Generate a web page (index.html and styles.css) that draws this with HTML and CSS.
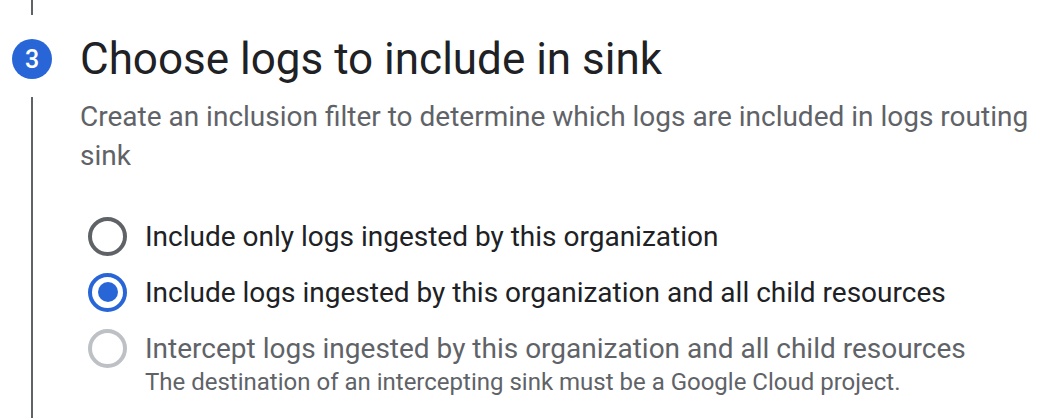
FILE: index.html
```html
<!DOCTYPE html>
<html>
<head>
<meta charset="utf-8">
<link rel="stylesheet" href="styles.css">
</head>
<body>
<div class="step">
  <div class="rail-top"></div>
  <div class="header">
    <div class="badge">3</div>
    <h2 class="title">Choose logs to include in sink</h2>
  </div>
  <div class="body">
    <div class="rail-line"></div>
    <div class="content">
      <p class="desc">Create an inclusion filter to determine which logs are included in logs routing sink</p>
      <div class="options">
        <label class="option">
          <span class="radio"></span>
          <span class="label">Include only logs ingested by this organization</span>
        </label>
        <label class="option">
          <span class="radio checked"></span>
          <span class="label">Include logs ingested by this organization and all child resources</span>
        </label>
        <div class="option-group">
          <label class="option disabled">
            <span class="radio"></span>
            <span class="label">Intercept logs ingested by this organization and all child resources</span>
          </label>
          <div class="hint">The destination of an intercepting sink must be a Google Cloud project.</div>
        </div>
      </div>
    </div>
  </div>
</div>
</body>
</html>
```

FILE: styles.css
```css
html, body {
  margin: 0;
  padding: 0;
  background: #ffffff;
  font-family: Roboto, "Liberation Sans", sans-serif;
  overflow: hidden;
}
.step {
  display: flex;
  flex-direction: column;
  height: 418px;
}
.rail-top {
  width: 2px;
  height: 15px;
  margin-left: 31px;
  background: #5f6368;
}
.header {
  display: flex;
  align-items: center;
  margin-top: 24px;
  height: 40px;
}
.badge {
  width: 40px;
  height: 40px;
  margin-left: 12px;
  border-radius: 50%;
  background: #2866d8;
  color: #fff;
  font-size: 25px;
  font-weight: 500;
  display: flex;
  align-items: center;
  justify-content: center;
}
.title {
  margin: 0 0 0 28px;
  font-size: 44px;
  font-weight: 400;
  color: #202124;
  line-height: 40px;
}
.body {
  display: flex;
  flex: 1;
  margin-top: 18px;
}
.rail-line {
  width: 2px;
  margin-left: 31px;
  background: #5f6368;
}
.content {
  margin-left: 47px;
  flex: 1;
}
.desc {
  margin: 0;
  font-size: 28px;
  line-height: 39px;
  color: #5f6368;
}
.options {
  display: flex;
  flex-direction: column;
  margin-top: 41px;
  gap: 16px;
}
.option {
  display: flex;
  align-items: center;
  height: 40px;
}
.radio {
  box-sizing: border-box;
  width: 39px;
  height: 39px;
  margin-left: 8px;
  border-radius: 50%;
  border: 4px solid #5f6368;
  display: flex;
  align-items: center;
  justify-content: center;
}
.radio.checked {
  border-color: #2866d8;
}
.radio.checked::after {
  content: "";
  width: 20px;
  height: 20px;
  border-radius: 50%;
  background: #2866d8;
}
.label {
  margin-left: 18px;
  font-size: 28px;
  color: #202124;
}
.option.disabled .radio {
  border-color: #bdc1c6;
}
.option.disabled .label {
  color: #5f6368;
}
.hint {
  margin-left: 65px;
  font-size: 24px;
  color: #5f6368;
  line-height: 28px;
}
```
